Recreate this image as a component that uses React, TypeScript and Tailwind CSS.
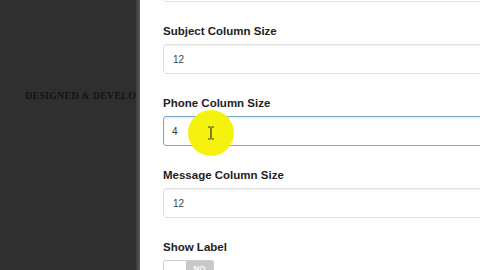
import { Fragment } from "react";

const fields = [
  { label: "Subject Column Size", value: "12", focus: false },
  { label: "Phone Column Size", value: "4", focus: true },
  { label: "Message Column Size", value: "12", focus: false },
];

export default function App() {
  return (
    <div
      className="relative flex h-[270px] w-[480px] overflow-hidden bg-white"
      style={{ fontFamily: '"Liberation Sans", Arial, sans-serif' }}
    >
      {/* dark backdrop */}
      <div className="w-[136px] shrink-0 overflow-hidden bg-[#2f2f2f]">
        <div
          className="mt-[88px] ml-[25px] whitespace-nowrap text-[10px] font-bold tracking-[0.2px] text-[#141414]"
          style={{ fontFamily: '"Liberation Serif", serif' }}
        >
          DESIGNED &amp; DEVELOPED BY
        </div>
      </div>
      <div className="w-[4px] shrink-0 bg-gradient-to-r from-[#3a3a3a] to-[#5a5a5e]" />

      {/* settings panel */}
      <div className="flex-1 overflow-hidden bg-white pl-[23px]">
        <div className="-mt-[28px] h-[30px] w-[360px] rounded-[3px] border border-[#e2e2e2]" />
        {fields.map((f) => (
          <Fragment key={f.label}>
            <div className="mt-[22px] h-[14px] text-[11.5px] leading-[14px] font-bold text-[#222]">
              {f.label}
            </div>
            <div
              className={
                f.focus
                  ? "mt-[6px] flex h-[30px] w-[360px] items-center rounded-[3px] border border-[#7ea6d3] pl-[8px] text-[10px] text-[#333] shadow-[inset_0_1px_2px_rgba(0,0,0,0.1)]"
                  : "mt-[6px] flex h-[30px] w-[360px] items-center rounded-[3px] border border-[#e0e0e0] pl-[9px] text-[10px] text-[#444] shadow-[inset_0_1px_2px_rgba(0,0,0,0.06)]"
              }
            >
              {f.value}
            </div>
          </Fragment>
        ))}
        <div className="mt-[22px] h-[14px] text-[11.5px] leading-[14px] font-bold text-[#222]">
          Show Label
        </div>
        <div className="mt-[6px] flex h-[14px] w-[51px] overflow-hidden rounded-[2px] border border-[#cfcfcf]">
          <div className="w-[22px] bg-white" />
          <div className="flex flex-1 items-start justify-center bg-[#c8c8c8] pt-[2px] text-[8px] font-bold text-white">
            NO
          </div>
        </div>
      </div>

      {/* cursor highlight */}
      <div className="absolute left-[188px] top-[110px] h-[46px] w-[46px] rounded-full bg-[#f4f200] opacity-95" />
      <svg className="absolute left-[207px] top-[126px]" width="8" height="14" viewBox="0 0 8 14">
        <path d="M1 1h2.5M4.5 1H7M4 1.5v11M1 13h2.5M4.5 13H7" stroke="#333" strokeWidth="1.2" fill="none" />
      </svg>
    </div>
  );
}
